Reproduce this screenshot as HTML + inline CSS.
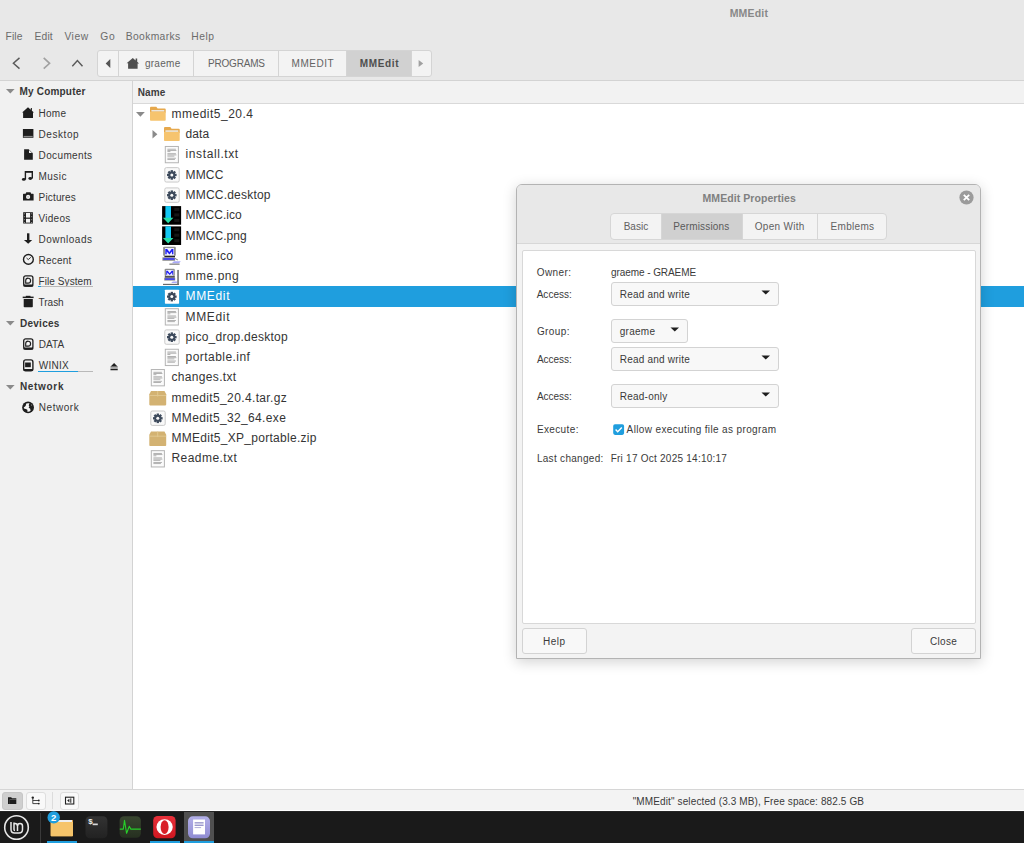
<!DOCTYPE html>
<html><head><meta charset="utf-8"><style>
html,body{margin:0;padding:0;}
body{width:1024px;height:843px;position:relative;overflow:hidden;background:#e8e8e8;font-family:"Liberation Sans", sans-serif;}
.a{position:absolute;}
.t{position:absolute;white-space:nowrap;}
</style></head><body>
<div class="a" style="left:0px;top:0px;width:1024px;height:80px;background:#e8e8e8;"></div>
<div class="a" style="left:0px;top:80px;width:1024px;height:1px;background:#d3d3d3;"></div>
<div class="t" id="t0" style="left:729.70px;top:7.61px;font-size:10.5px;line-height:10.5px;color:#888888;font-weight:700;letter-spacing:0.180px;">MMEdit</div>
<div class="t" id="t1" style="left:5.60px;top:31.68px;font-size:10.3px;line-height:10.3px;color:#6b6b6b;font-weight:400;letter-spacing:0.066px;">File</div>
<div class="t" id="t2" style="left:34.40px;top:31.68px;font-size:10.3px;line-height:10.3px;color:#6b6b6b;font-weight:400;letter-spacing:0.200px;">Edit</div>
<div class="t" id="t3" style="left:64.40px;top:31.68px;font-size:10.3px;line-height:10.3px;color:#6b6b6b;font-weight:400;letter-spacing:0.534px;">View</div>
<div class="t" id="t4" style="left:100.30px;top:31.68px;font-size:10.3px;line-height:10.3px;color:#6b6b6b;font-weight:400;letter-spacing:0.700px;">Go</div>
<div class="t" id="t5" style="left:125.70px;top:31.68px;font-size:10.3px;line-height:10.3px;color:#6b6b6b;font-weight:400;letter-spacing:0.375px;">Bookmarks</div>
<div class="t" id="t6" style="left:191.20px;top:31.68px;font-size:10.3px;line-height:10.3px;color:#6b6b6b;font-weight:400;letter-spacing:0.567px;">Help</div>
<svg class="a" style="left:0px;top:50px;" width="100" height="26" viewBox="0 0 100 26"><path d="M19.5 7.9 L13.4 13.3 L19.5 18.6" fill="none" stroke="#5a5a5a" stroke-width="1.45"/><path d="M43.7 7.9 L49.6 13.3 L43.7 18.6" fill="none" stroke="#a0a0a0" stroke-width="1.6"/><path d="M72.3 16.2 L77.4 10.6 L82.5 16.2" fill="none" stroke="#5a5a5a" stroke-width="1.45"/></svg>
<div class="a" style="left:97px;top:50px;width:335px;height:27px;background:#f3f3f3;box-sizing:border-box;border:1px solid #d4d4d4;border-radius:3px;"></div>
<div class="a" style="left:346px;top:51px;width:65px;height:25px;background:#d1d1d1;"></div>
<div class="a" style="left:118px;top:51px;width:1px;height:25px;background:#d4d4d4;"></div>
<div class="a" style="left:193px;top:51px;width:1px;height:25px;background:#d4d4d4;"></div>
<div class="a" style="left:278px;top:51px;width:1px;height:25px;background:#d4d4d4;"></div>
<div class="a" style="left:346px;top:51px;width:1px;height:25px;background:#d4d4d4;"></div>
<div class="a" style="left:411px;top:51px;width:1px;height:25px;background:#d4d4d4;"></div>
<svg class="a" style="left:100px;top:51px;" width="20" height="25" viewBox="0 0 20 25"><path d="M10.3 7.9 L10.3 16.9 L5.7 12.4 Z" fill="#555"/></svg>
<svg class="a" style="left:410px;top:51px;" width="20" height="25" viewBox="0 0 20 25"><path d="M8.6 9 L8.6 16 L13.2 12.5 Z" fill="#a0a0a0"/></svg>
<svg class="a" style="left:126px;top:57px;" width="14" height="13" viewBox="0 0 14 13"><path d="M0.6 6.3 L6.8 1 L9.6 3.4 L9.6 1.6 L11.2 1.6 L11.2 4.8 L13.1 6.4 L11.6 6.4 L11.6 11.7 L2.1 11.7 L2.1 6.3 Z" fill="#4f4f4f"/></svg>
<div class="t" id="t7" style="left:144.90px;top:58.93px;font-size:10px;line-height:10px;color:#626262;font-weight:400;letter-spacing:0.280px;">graeme</div>
<div class="t" id="t8" style="left:208.00px;top:58.93px;font-size:10px;line-height:10px;color:#626262;font-weight:400;letter-spacing:-0.185px;">PROGRAMS</div>
<div class="t" id="t9" style="left:291.60px;top:58.93px;font-size:10px;line-height:10px;color:#626262;font-weight:400;letter-spacing:0.500px;">MMEDIT</div>
<div class="t" id="t10" style="left:359.70px;top:58.93px;font-size:10px;line-height:10px;color:#4e4e4e;font-weight:700;letter-spacing:0.660px;">MMEdit</div>
<div class="a" style="left:0px;top:81px;width:132px;height:708px;background:#f1f1f1;"></div>
<div class="a" style="left:132px;top:81px;width:1px;height:708px;background:#d3d3d3;"></div>
<svg class="a" style="left:5.9px;top:89.2px;" width="10" height="6" viewBox="0 0 10 6"><path d="M0 0 L8.6 0 L4.3 4.6 Z" fill="#8a8a8a"/></svg>
<div class="t" id="t11" style="left:19.60px;top:86.93px;font-size:10px;line-height:10px;color:#363636;font-weight:700;letter-spacing:0.180px;">My Computer</div>
<div class="t" id="t12" style="left:38.60px;top:108.53px;font-size:10px;line-height:10px;color:#363636;font-weight:400;letter-spacing:0.234px;">Home</div>
<div class="t" id="t13" style="left:38.60px;top:129.53px;font-size:10px;line-height:10px;color:#363636;font-weight:400;letter-spacing:0.551px;">Desktop</div>
<div class="t" id="t14" style="left:38.60px;top:150.53px;font-size:10px;line-height:10px;color:#363636;font-weight:400;letter-spacing:0.361px;">Documents</div>
<div class="t" id="t15" style="left:38.60px;top:171.53px;font-size:10px;line-height:10px;color:#363636;font-weight:400;letter-spacing:0.425px;">Music</div>
<div class="t" id="t16" style="left:38.60px;top:192.53px;font-size:10px;line-height:10px;color:#363636;font-weight:400;letter-spacing:0.157px;">Pictures</div>
<div class="t" id="t17" style="left:38.60px;top:213.53px;font-size:10px;line-height:10px;color:#363636;font-weight:400;letter-spacing:0.240px;">Videos</div>
<div class="t" id="t18" style="left:38.60px;top:234.53px;font-size:10px;line-height:10px;color:#363636;font-weight:400;letter-spacing:0.486px;">Downloads</div>
<div class="t" id="t19" style="left:38.60px;top:255.53px;font-size:10px;line-height:10px;color:#363636;font-weight:400;letter-spacing:0.200px;">Recent</div>
<div class="t" id="t20" style="left:38.60px;top:276.54px;font-size:10px;line-height:10px;color:#363636;font-weight:400;letter-spacing:0.070px;">File System</div>
<div class="t" id="t21" style="left:38.60px;top:297.54px;font-size:10px;line-height:10px;color:#363636;font-weight:400;letter-spacing:-0.025px;">Trash</div>
<svg class="a" style="left:5.9px;top:321.4px;" width="10" height="6" viewBox="0 0 10 6"><path d="M0 0 L8.6 0 L4.3 4.6 Z" fill="#8a8a8a"/></svg>
<div class="t" id="t22" style="left:19.90px;top:318.74px;font-size:10px;line-height:10px;color:#363636;font-weight:700;letter-spacing:0.283px;">Devices</div>
<div class="t" id="t23" style="left:38.80px;top:339.84px;font-size:10px;line-height:10px;color:#363636;font-weight:400;letter-spacing:0.033px;">DATA</div>
<div class="t" id="t24" style="left:38.80px;top:360.84px;font-size:10px;line-height:10px;color:#363636;font-weight:400;letter-spacing:0.225px;">WINIX</div>
<svg class="a" style="left:5.9px;top:384.5px;" width="10" height="6" viewBox="0 0 10 6"><path d="M0 0 L8.6 0 L4.3 4.6 Z" fill="#8a8a8a"/></svg>
<div class="t" id="t25" style="left:19.90px;top:381.84px;font-size:10px;line-height:10px;color:#363636;font-weight:700;letter-spacing:0.683px;">Network</div>
<div class="t" id="t26" style="left:38.80px;top:402.64px;font-size:10px;line-height:10px;color:#363636;font-weight:400;letter-spacing:0.534px;">Network</div>
<svg class="a" style="left:20px;top:105px;" width="16" height="15" viewBox="0 0 16 15"><path d="M2.1 7.5 L8 2.2 L10.8 4.7 L10.8 3 L11.9 3 L11.9 5.7 L14 7.5 L13 7.5 L13 12.9 L3.1 12.9 L3.1 7.5 Z" fill="#1e1e1e"/></svg>
<svg class="a" style="left:20px;top:127px;" width="16" height="13" viewBox="0 0 16 13"><rect x="2.9" y="2" width="10.5" height="8.8" fill="#1e1e1e"/><rect x="3.6" y="8.9" width="9.1" height="1.3" fill="#8a8a8a"/></svg>
<svg class="a" style="left:20px;top:147px;" width="16" height="15" viewBox="0 0 16 15"><path d="M4.1 2.2 L8.7 2.2 L12.8 6.3 L12.8 12.7 L4.1 12.7 Z" fill="#1e1e1e"/><path d="M9 3 L12 6 L9 6 Z" fill="#f1f1f1"/></svg>
<svg class="a" style="left:20px;top:169px;" width="16" height="14" viewBox="0 0 16 14"><path d="M5.4 10.4 L5.4 2.8 L12.3 2.8 L12.3 9.6" fill="none" stroke="#1e1e1e" stroke-width="1.4"/><rect x="5" y="2" width="7.8" height="1.6" fill="#1e1e1e"/><ellipse cx="3.8" cy="10.4" rx="1.9" ry="1.4" fill="#1e1e1e"/><ellipse cx="10.3" cy="9.5" rx="1.9" ry="1.4" fill="#1e1e1e"/></svg>
<svg class="a" style="left:20px;top:190px;" width="16" height="13" viewBox="0 0 16 13"><path d="M3 4.2 Q3 3.8 3.5 3.8 L5.6 3.8 L6.3 2.3 L10.5 2.3 L11.2 3.8 L13.1 3.8 Q13.6 3.8 13.6 4.3 L13.6 10.6 L3 10.6 Z" fill="#1e1e1e"/><circle cx="8.1" cy="6.9" r="2.1" fill="#f1f1f1"/><circle cx="8.1" cy="6.9" r="0.8" fill="#bbb"/></svg>
<svg class="a" style="left:20px;top:210px;" width="16" height="16" viewBox="0 0 16 16"><rect x="3.2" y="2.2" width="9.7" height="11.3" fill="#1e1e1e"/><rect x="6" y="3" width="4.1" height="4.6" fill="#f4f4f4"/><rect x="6" y="8.8" width="4.1" height="3.8" fill="#f4f4f4"/><rect x="3.9" y="3.3" width="1.2" height="1" fill="#888"/><rect x="11" y="3.3" width="1.2" height="1" fill="#888"/><rect x="3.9" y="6.2" width="1.2" height="1" fill="#888"/><rect x="11" y="6.2" width="1.2" height="1" fill="#888"/><rect x="3.9" y="9.2" width="1.2" height="1" fill="#888"/><rect x="11" y="9.2" width="1.2" height="1" fill="#888"/><rect x="3.9" y="12" width="1.2" height="1" fill="#888"/><rect x="11" y="12" width="1.2" height="1" fill="#888"/></svg>
<svg class="a" style="left:20px;top:231px;" width="16" height="15" viewBox="0 0 16 15"><rect x="7" y="2.3" width="2.4" height="7" fill="#1e1e1e"/><path d="M3.9 9 L12.2 9 L8.2 12.8 Z" fill="#1e1e1e"/></svg>
<svg class="a" style="left:20px;top:251px;" width="16" height="16" viewBox="0 0 16 16"><circle cx="8.4" cy="8.4" r="4.9" fill="none" stroke="#1e1e1e" stroke-width="1.4"/><path d="M6.5 7 L8.3 8.6 L10.8 6.3" fill="none" stroke="#1e1e1e" stroke-width="0.9"/></svg>
<svg class="a" style="left:20px;top:275px;" width="16" height="14" viewBox="0 0 16 14"><rect x="3.7" y="0.8" width="9.2" height="10.2" rx="2" fill="none" stroke="#1e1e1e" stroke-width="1.3"/><rect x="3.3" y="9.4" width="10" height="2.3" rx="1" fill="#1e1e1e"/><path d="M5.7 8.1 L5.7 5.6 A2.45 2.45 0 1 1 8.15 8.1 Z" fill="none" stroke="#1e1e1e" stroke-width="1.15"/><circle cx="8.15" cy="5.6" r="0.8" fill="#fff"/></svg>
<svg class="a" style="left:20px;top:338.2px;" width="16" height="14" viewBox="0 0 16 14"><rect x="3.7" y="0.8" width="9.2" height="10.2" rx="2" fill="none" stroke="#1e1e1e" stroke-width="1.3"/><rect x="3.3" y="9.4" width="10" height="2.3" rx="1" fill="#1e1e1e"/><path d="M5.7 8.1 L5.7 5.6 A2.45 2.45 0 1 1 8.15 8.1 Z" fill="none" stroke="#1e1e1e" stroke-width="1.15"/><circle cx="8.15" cy="5.6" r="0.8" fill="#fff"/></svg>
<svg class="a" style="left:20px;top:294px;" width="16" height="15" viewBox="0 0 16 15"><rect x="2.7" y="2.6" width="10.9" height="1.5" fill="#1e1e1e"/><rect x="5.8" y="1.8" width="4.7" height="1.2" fill="#1e1e1e"/><path d="M3.7 5 L12.8 5 L12.8 12.6 Q12.8 13.3 12 13.3 L4.5 13.3 Q3.7 13.3 3.7 12.6 Z" fill="#1e1e1e"/></svg>
<svg class="a" style="left:20px;top:358.5px;" width="16" height="14" viewBox="0 0 16 14"><rect x="3.7" y="0.9" width="9.2" height="10.9" rx="2" fill="none" stroke="#1e1e1e" stroke-width="1.4"/><rect x="3.5" y="9.9" width="9.6" height="2.2" rx="1" fill="#1e1e1e"/><rect x="5.1" y="3.5" width="5.7" height="4.7" fill="#1e1e1e"/></svg>
<svg class="a" style="left:20px;top:399px;" width="16" height="16" viewBox="0 0 16 16"><circle cx="8.05" cy="8.4" r="5.9" fill="#1e1e1e"/><path d="M6.3 4.5 Q7.6 3.9 9.5 4.3 L8.7 6.2 L9.4 7.4 L8.6 8.6 L10.2 9.8 L10.6 11.8 Q9 13 7.2 12.6 L7.5 11 L6 10 L4.4 9.8 L3.7 8.5 L5.6 7 Z" fill="#f5f5f5"/><path d="M11 5.6 L12.2 6 L11.6 6.7 Z" fill="#ddd"/></svg>
<svg class="a" style="left:108px;top:360px;" width="12" height="12" viewBox="0 0 12 12"><path d="M2.4 6.7 L6.1 2.9 L9.8 6.7 Z" fill="#1e1e1e"/><rect x="2.4" y="6.7" width="7.4" height="2.3" fill="#a8a8a8"/><rect x="2.4" y="9" width="7.4" height="1.3" rx="0.5" fill="#1e1e1e"/></svg>
<div class="a" style="left:38.3px;top:286px;width:54.5px;height:1.2px;background:#b9b9b9;"></div>
<div class="a" style="left:38.3px;top:286px;width:3px;height:1.2px;background:#1f9ede;"></div>
<div class="a" style="left:38.3px;top:370.6px;width:54.5px;height:1.4px;background:#b9b9b9;"></div>
<div class="a" style="left:38.3px;top:370.6px;width:40px;height:1.4px;background:#1f9ede;"></div>
<div class="a" style="left:133px;top:81px;width:891px;height:22px;background:#f2f2f2;"></div>
<div class="a" style="left:133px;top:103px;width:891px;height:1px;background:#d9d9d9;"></div>
<div class="a" style="left:133px;top:104px;width:891px;height:685px;background:#ffffff;"></div>
<div class="t" id="t27" style="left:137.80px;top:88.03px;font-size:10px;line-height:10px;color:#3d3d3d;font-weight:700;letter-spacing:0.066px;">Name</div>
<div class="a" style="left:133px;top:286px;width:891px;height:20.6px;background:#1f9ede;"></div>
<div class="t" id="t28" style="left:171.50px;top:107.94px;font-size:12px;line-height:12px;color:#343434;font-weight:400;letter-spacing:0.500px;">mmedit5_20.4</div>
<div class="t" id="t29" style="left:185.60px;top:128.20px;font-size:12px;line-height:12px;color:#343434;font-weight:400;letter-spacing:0.066px;">data</div>
<div class="t" id="t30" style="left:185.60px;top:148.46px;font-size:12px;line-height:12px;color:#343434;font-weight:400;letter-spacing:0.590px;">install.txt</div>
<div class="t" id="t31" style="left:185.60px;top:168.72px;font-size:12px;line-height:12px;color:#343434;font-weight:400;letter-spacing:0.133px;">MMCC</div>
<div class="t" id="t32" style="left:185.60px;top:188.98px;font-size:12px;line-height:12px;color:#343434;font-weight:400;letter-spacing:0.199px;">MMCC.desktop</div>
<div class="t" id="t33" style="left:185.60px;top:209.24px;font-size:12px;line-height:12px;color:#343434;font-weight:400;letter-spacing:0.014px;">MMCC.ico</div>
<div class="t" id="t34" style="left:185.60px;top:229.50px;font-size:12px;line-height:12px;color:#343434;font-weight:400;letter-spacing:0.071px;">MMCC.png</div>
<div class="t" id="t35" style="left:185.60px;top:249.76px;font-size:12px;line-height:12px;color:#343434;font-weight:400;letter-spacing:0.350px;">mme.ico</div>
<div class="t" id="t36" style="left:185.60px;top:270.02px;font-size:12px;line-height:12px;color:#343434;font-weight:400;letter-spacing:0.517px;">mme.png</div>
<div class="t" id="t37" style="left:185.60px;top:290.28px;font-size:12px;line-height:12px;color:#ffffff;font-weight:400;letter-spacing:0.640px;">MMEdit</div>
<div class="t" id="t38" style="left:185.60px;top:310.54px;font-size:12px;line-height:12px;color:#343434;font-weight:400;letter-spacing:0.640px;">MMEdit</div>
<div class="t" id="t39" style="left:185.60px;top:330.80px;font-size:12px;line-height:12px;color:#343434;font-weight:400;letter-spacing:0.244px;">pico_drop.desktop</div>
<div class="t" id="t40" style="left:185.60px;top:351.06px;font-size:12px;line-height:12px;color:#343434;font-weight:400;letter-spacing:0.445px;">portable.inf</div>
<div class="t" id="t41" style="left:171.50px;top:371.32px;font-size:12px;line-height:12px;color:#343434;font-weight:400;letter-spacing:0.330px;">changes.txt</div>
<div class="t" id="t42" style="left:171.50px;top:391.58px;font-size:12px;line-height:12px;color:#343434;font-weight:400;letter-spacing:0.366px;">mmedit5_20.4.tar.gz</div>
<div class="t" id="t43" style="left:171.50px;top:411.84px;font-size:12px;line-height:12px;color:#343434;font-weight:400;letter-spacing:0.351px;">MMedit5_32_64.exe</div>
<div class="t" id="t44" style="left:171.50px;top:432.10px;font-size:12px;line-height:12px;color:#343434;font-weight:400;letter-spacing:0.282px;">MMEdit5_XP_portable.zip</div>
<div class="t" id="t45" style="left:171.50px;top:452.36px;font-size:12px;line-height:12px;color:#343434;font-weight:400;letter-spacing:0.444px;">Readme.txt</div>
<svg class="a" style="left:0;top:0" width="1024" height="843" viewBox="0 0 1024 843"><path d="M150 108.2 Q150 106.8 150.9 106.8 L156.3 106.8 L157.6 108.39999999999999 L164.8 108.39999999999999 Q165.7 108.39999999999999 165.7 109.3 L165.7 112.8 L150 112.8 Z" fill="#e6a84c"/><rect x="151.4" y="110.0" width="12.9" height="1.6" fill="#ebe6dc"/><path d="M150 111.8 L165.7 111.8 L165.7 119.89999999999999 Q165.7 120.7 164.9 120.7 L150.8 120.7 Q150 120.7 150 119.89999999999999 Z" fill="#f6c46e"/><path d="M164 128.48 Q164 127.08 164.9 127.08 L170.3 127.08 L171.6 128.68 L178.8 128.68 Q179.7 128.68 179.7 129.57999999999998 L179.7 133.07999999999998 L164 133.07999999999998 Z" fill="#e6a84c"/><rect x="165.4" y="130.28" width="12.9" height="1.6" fill="#ebe6dc"/><path d="M164 132.07999999999998 L179.7 132.07999999999998 L179.7 140.18 Q179.7 140.98 178.9 140.98 L164.8 140.98 Q164 140.98 164 140.18 Z" fill="#f6c46e"/><rect x="165.3" y="146.46" width="13.1" height="16.3" fill="#fbfbfb" stroke="#b4b4b4" stroke-width="1"/><rect x="167.4" y="148.76000000000002" width="8.5" height="0.9" fill="#a9a9a9"/><rect x="167.4" y="149.96" width="9" height="0.9" fill="#a9a9a9"/><rect x="167.4" y="151.16" width="3" height="0.9" fill="#a9a9a9"/><rect x="167.4" y="153.26000000000002" width="8.5" height="0.9" fill="#a9a9a9"/><rect x="167.4" y="154.46" width="9" height="0.9" fill="#a9a9a9"/><rect x="167.4" y="155.66" width="7" height="0.9" fill="#a9a9a9"/><rect x="167.4" y="157.76000000000002" width="8.5" height="0.9" fill="#a9a9a9"/><rect x="167.4" y="158.96" width="7.5" height="0.9" fill="#a9a9a9"/><rect x="164.8" y="167.64000000000001" width="14.4" height="14.4" rx="1.5" fill="#f9f9f9" stroke="#c9c9c9" stroke-width="1"/><g transform="translate(171.8 174.94000000000003)" fill="#3d4a5c"><circle r="3.5"/><rect x="-1.15" y="-4.8" width="2.3" height="2.2" transform="rotate(0)"/><rect x="-1.15" y="-4.8" width="2.3" height="2.2" transform="rotate(45)"/><rect x="-1.15" y="-4.8" width="2.3" height="2.2" transform="rotate(90)"/><rect x="-1.15" y="-4.8" width="2.3" height="2.2" transform="rotate(135)"/><rect x="-1.15" y="-4.8" width="2.3" height="2.2" transform="rotate(180)"/><rect x="-1.15" y="-4.8" width="2.3" height="2.2" transform="rotate(225)"/><rect x="-1.15" y="-4.8" width="2.3" height="2.2" transform="rotate(270)"/><rect x="-1.15" y="-4.8" width="2.3" height="2.2" transform="rotate(315)"/><circle r="1.5" fill="#f9f9f9"/></g><rect x="164.8" y="187.92000000000002" width="14.4" height="14.4" rx="1.5" fill="#f9f9f9" stroke="#c9c9c9" stroke-width="1"/><g transform="translate(171.8 195.22000000000003)" fill="#3d4a5c"><circle r="3.5"/><rect x="-1.15" y="-4.8" width="2.3" height="2.2" transform="rotate(0)"/><rect x="-1.15" y="-4.8" width="2.3" height="2.2" transform="rotate(45)"/><rect x="-1.15" y="-4.8" width="2.3" height="2.2" transform="rotate(90)"/><rect x="-1.15" y="-4.8" width="2.3" height="2.2" transform="rotate(135)"/><rect x="-1.15" y="-4.8" width="2.3" height="2.2" transform="rotate(180)"/><rect x="-1.15" y="-4.8" width="2.3" height="2.2" transform="rotate(225)"/><rect x="-1.15" y="-4.8" width="2.3" height="2.2" transform="rotate(270)"/><rect x="-1.15" y="-4.8" width="2.3" height="2.2" transform="rotate(315)"/><circle r="1.5" fill="#f9f9f9"/></g><rect x="162.1" y="206.1" width="19" height="18.6" fill="#000"/><rect x="165.4" y="206.1" width="5.6" height="12" fill="#14c8f4"/><path d="M162.9 217.7 L173.4 217.7 L168.15 223.29999999999998 Z" fill="#27dfa6"/><g fill="#161616"><rect x="174.29999999999998" y="207.9" width="5" height="3"/><rect x="174.29999999999998" y="213.4" width="5" height="3"/><rect x="174.29999999999998" y="218.9" width="5" height="3"/></g><rect x="162.1" y="226.38" width="19" height="18.6" fill="#000"/><rect x="165.4" y="226.38" width="5.6" height="12" fill="#14c8f4"/><path d="M162.9 237.98 L173.4 237.98 L168.15 243.57999999999998 Z" fill="#27dfa6"/><g fill="#161616"><rect x="174.29999999999998" y="228.18" width="5" height="3"/><rect x="174.29999999999998" y="233.68" width="5" height="3"/><rect x="174.29999999999998" y="239.18" width="5" height="3"/></g><rect x="163.1" y="246.66" width="12.7" height="9.3" rx="1.2" fill="#8e8e8e"/><rect x="165.0" y="248.06" width="9" height="7.3" fill="#f2f2ff"/><path d="M165.29999999999998 254.16 L165.29999999999998 248.96 L167.2 248.96 L169.39999999999998 251.96 L171.6 248.96 L173.39999999999998 248.96 L173.39999999999998 254.16 L172.0 254.16 L172.0 251.56 L169.39999999999998 254.56 L166.7 251.56 L166.7 254.16 Z" fill="#2020f4"/><rect x="164.39999999999998" y="256.06" width="10.6" height="1.2" fill="#151515"/><rect x="162.39999999999998" y="257.36" width="12.7" height="3.4" fill="#8a8a8a"/><rect x="163.39999999999998" y="257.96000000000004" width="11.1" height="2" fill="#4848e6"/><path d="M175.1 258.46000000000004 L177.79999999999998 259.96000000000004" stroke="#666" stroke-width="0.9"/><path d="M171.7 263.16 L174.0 261.16 L180.79999999999998 261.16 L179.0 263.16 Z" fill="#a9a9f6"/><rect x="169.39999999999998" y="263.56" width="10.2" height="1.2" fill="#7a7a7a"/><rect x="164.6" y="268.84000000000003" width="10.2" height="7.4" rx="1.2" fill="#8e8e8e"/><rect x="166.0" y="270.04" width="7.4" height="5.6" fill="#f2f2ff"/><path d="M166.2 274.64 L166.2 270.74 L167.7 270.74 L169.7 273.24 L171.7 270.74 L173.2 270.74 L173.2 274.64 L172.2 274.64 L172.2 272.44 L169.7 275.04 L167.2 272.44 L167.2 274.64 Z" fill="#2020f4"/><rect x="164.79999999999998" y="276.24" width="10" height="1.4" fill="#262626"/><rect x="164.2" y="277.74" width="11" height="2.8" fill="#8a8a8a"/><rect x="165.0" y="278.24" width="9.6" height="1.8" fill="#4848e6"/><path d="M171.2 283.04 L172.79999999999998 281.44 L177.79999999999998 281.44 L176.5 283.04 Z" fill="#a9a9f6"/><rect x="177.2" y="269.94" width="1.7" height="14.8" fill="#7a7a7a"/><rect x="163.0" y="283.84000000000003" width="15.9" height="1.2" fill="#6a6a6a"/><rect x="164.9" y="289.71999999999997" width="14.2" height="14" rx="0.6" fill="#ffffff"/><g transform="translate(171.8 296.62)" fill="#3d4a5c"><circle r="3.5"/><rect x="-1.15" y="-4.8" width="2.3" height="2.2" transform="rotate(0)"/><rect x="-1.15" y="-4.8" width="2.3" height="2.2" transform="rotate(45)"/><rect x="-1.15" y="-4.8" width="2.3" height="2.2" transform="rotate(90)"/><rect x="-1.15" y="-4.8" width="2.3" height="2.2" transform="rotate(135)"/><rect x="-1.15" y="-4.8" width="2.3" height="2.2" transform="rotate(180)"/><rect x="-1.15" y="-4.8" width="2.3" height="2.2" transform="rotate(225)"/><rect x="-1.15" y="-4.8" width="2.3" height="2.2" transform="rotate(270)"/><rect x="-1.15" y="-4.8" width="2.3" height="2.2" transform="rotate(315)"/><circle r="1.5" fill="#ffffff"/></g><rect x="165.3" y="308.7" width="13.1" height="16.3" fill="#fbfbfb" stroke="#b4b4b4" stroke-width="1"/><rect x="167.4" y="311.0" width="8.5" height="0.9" fill="#a9a9a9"/><rect x="167.4" y="312.2" width="9" height="0.9" fill="#a9a9a9"/><rect x="167.4" y="313.4" width="3" height="0.9" fill="#a9a9a9"/><rect x="167.4" y="315.5" width="8.5" height="0.9" fill="#a9a9a9"/><rect x="167.4" y="316.7" width="9" height="0.9" fill="#a9a9a9"/><rect x="167.4" y="317.9" width="7" height="0.9" fill="#a9a9a9"/><rect x="167.4" y="320.0" width="8.5" height="0.9" fill="#a9a9a9"/><rect x="167.4" y="321.2" width="7.5" height="0.9" fill="#a9a9a9"/><rect x="164.8" y="329.88000000000005" width="14.4" height="14.4" rx="1.5" fill="#f9f9f9" stroke="#c9c9c9" stroke-width="1"/><g transform="translate(171.8 337.18000000000006)" fill="#3d4a5c"><circle r="3.5"/><rect x="-1.15" y="-4.8" width="2.3" height="2.2" transform="rotate(0)"/><rect x="-1.15" y="-4.8" width="2.3" height="2.2" transform="rotate(45)"/><rect x="-1.15" y="-4.8" width="2.3" height="2.2" transform="rotate(90)"/><rect x="-1.15" y="-4.8" width="2.3" height="2.2" transform="rotate(135)"/><rect x="-1.15" y="-4.8" width="2.3" height="2.2" transform="rotate(180)"/><rect x="-1.15" y="-4.8" width="2.3" height="2.2" transform="rotate(225)"/><rect x="-1.15" y="-4.8" width="2.3" height="2.2" transform="rotate(270)"/><rect x="-1.15" y="-4.8" width="2.3" height="2.2" transform="rotate(315)"/><circle r="1.5" fill="#f9f9f9"/></g><rect x="165.3" y="349.26" width="13.1" height="16.3" fill="#fbfbfb" stroke="#b4b4b4" stroke-width="1"/><rect x="167.4" y="351.56" width="8.5" height="0.9" fill="#a9a9a9"/><rect x="167.4" y="352.76" width="9" height="0.9" fill="#a9a9a9"/><rect x="167.4" y="353.96" width="3" height="0.9" fill="#a9a9a9"/><rect x="167.4" y="356.06" width="8.5" height="0.9" fill="#a9a9a9"/><rect x="167.4" y="357.26" width="9" height="0.9" fill="#a9a9a9"/><rect x="167.4" y="358.46" width="7" height="0.9" fill="#a9a9a9"/><rect x="167.4" y="360.56" width="8.5" height="0.9" fill="#a9a9a9"/><rect x="167.4" y="361.76" width="7.5" height="0.9" fill="#a9a9a9"/><rect x="151.3" y="369.53999999999996" width="13.1" height="16.3" fill="#fbfbfb" stroke="#b4b4b4" stroke-width="1"/><rect x="153.4" y="371.84" width="8.5" height="0.9" fill="#a9a9a9"/><rect x="153.4" y="373.03999999999996" width="9" height="0.9" fill="#a9a9a9"/><rect x="153.4" y="374.23999999999995" width="3" height="0.9" fill="#a9a9a9"/><rect x="153.4" y="376.34" width="8.5" height="0.9" fill="#a9a9a9"/><rect x="153.4" y="377.53999999999996" width="9" height="0.9" fill="#a9a9a9"/><rect x="153.4" y="378.73999999999995" width="7" height="0.9" fill="#a9a9a9"/><rect x="153.4" y="380.84" width="8.5" height="0.9" fill="#a9a9a9"/><rect x="153.4" y="382.03999999999996" width="7.5" height="0.9" fill="#a9a9a9"/><path d="M151.0 391.02000000000004 L164.5 391.02000000000004 L166.20000000000002 394.22 L166.20000000000002 404.62000000000006 Q166.20000000000002 405.42 165.4 405.42 L150.10000000000002 405.42 Q149.3 405.42 149.3 404.62000000000006 L149.3 394.22 Z" fill="#d3b272"/><rect x="149.3" y="395.22" width="16.9" height="0.7" fill="#e6cf9c"/><rect x="157.20000000000002" y="391.02000000000004" width="1" height="5.5" fill="#e2c88e"/><rect x="150.8" y="411.00000000000006" width="14.4" height="14.4" rx="1.5" fill="#f9f9f9" stroke="#c9c9c9" stroke-width="1"/><g transform="translate(157.8 418.30000000000007)" fill="#3d4a5c"><circle r="3.5"/><rect x="-1.15" y="-4.8" width="2.3" height="2.2" transform="rotate(0)"/><rect x="-1.15" y="-4.8" width="2.3" height="2.2" transform="rotate(45)"/><rect x="-1.15" y="-4.8" width="2.3" height="2.2" transform="rotate(90)"/><rect x="-1.15" y="-4.8" width="2.3" height="2.2" transform="rotate(135)"/><rect x="-1.15" y="-4.8" width="2.3" height="2.2" transform="rotate(180)"/><rect x="-1.15" y="-4.8" width="2.3" height="2.2" transform="rotate(225)"/><rect x="-1.15" y="-4.8" width="2.3" height="2.2" transform="rotate(270)"/><rect x="-1.15" y="-4.8" width="2.3" height="2.2" transform="rotate(315)"/><circle r="1.5" fill="#f9f9f9"/></g><path d="M151.0 431.58000000000004 L164.5 431.58000000000004 L166.20000000000002 434.78000000000003 L166.20000000000002 445.18000000000006 Q166.20000000000002 445.98 165.4 445.98 L150.10000000000002 445.98 Q149.3 445.98 149.3 445.18000000000006 L149.3 434.78000000000003 Z" fill="#d3b272"/><rect x="149.3" y="435.78000000000003" width="16.9" height="0.7" fill="#e6cf9c"/><rect x="157.20000000000002" y="431.58000000000004" width="1" height="5.5" fill="#e2c88e"/><rect x="151.3" y="450.65999999999997" width="13.1" height="16.3" fill="#fbfbfb" stroke="#b4b4b4" stroke-width="1"/><rect x="153.4" y="452.96" width="8.5" height="0.9" fill="#a9a9a9"/><rect x="153.4" y="454.15999999999997" width="9" height="0.9" fill="#a9a9a9"/><rect x="153.4" y="455.35999999999996" width="3" height="0.9" fill="#a9a9a9"/><rect x="153.4" y="457.46" width="8.5" height="0.9" fill="#a9a9a9"/><rect x="153.4" y="458.65999999999997" width="9" height="0.9" fill="#a9a9a9"/><rect x="153.4" y="459.85999999999996" width="7" height="0.9" fill="#a9a9a9"/><rect x="153.4" y="461.96" width="8.5" height="0.9" fill="#a9a9a9"/><rect x="153.4" y="463.15999999999997" width="7.5" height="0.9" fill="#a9a9a9"/></svg>
<svg class="a" style="left:136.1px;top:111.6px;" width="10" height="6" viewBox="0 0 10 6"><path d="M0 0 L8.8 0 L4.4 4.8 Z" fill="#8a8a8a"/></svg>
<svg class="a" style="left:151.9px;top:129.7px;" width="6" height="9" viewBox="0 0 6 9"><path d="M0.5 0 L5.4 4.3 L0.5 8.6 Z" fill="#8a8a8a"/></svg>
<div class="a" style="left:0px;top:789px;width:1024px;height:1px;background:#d6d6d6;"></div>
<div class="a" style="left:0px;top:790px;width:1024px;height:20px;background:#f3f3f3;"></div>
<div class="a" style="left:0px;top:810px;width:1024px;height:1px;background:#ffffff;"></div>
<div class="a" style="left:2.2px;top:791.5px;width:20.5px;height:18.4px;background:#cfcfcf;box-sizing:border-box;border:1px solid #c6c6c6;border-radius:3px;"></div>
<div class="a" style="left:26.4px;top:791.5px;width:19.3px;height:18.4px;background:#f9f9f9;box-sizing:border-box;border:1px solid #dedede;border-radius:3px;"></div>
<div class="a" style="left:52.2px;top:792px;width:1px;height:17px;background:#dcdcdc;"></div>
<div class="a" style="left:59.6px;top:791.5px;width:19.9px;height:18.4px;background:#f9f9f9;box-sizing:border-box;border:1px solid #dedede;border-radius:3px;"></div>
<svg class="a" style="left:7px;top:796px;" width="12" height="10" viewBox="0 0 12 10"><path d="M1 1.2 L4.2 1.2 L5 2.2 L9.3 2.2 L9.3 3.4 L2.6 3.4 L2.6 8 L1 8 Z" fill="#1e1e1e"/><rect x="2.3" y="3.6" width="7" height="4.4" fill="#1e1e1e"/></svg>
<svg class="a" style="left:31px;top:796px;" width="11" height="10" viewBox="0 0 11 10"><circle cx="1.8" cy="1.6" r="1.2" fill="#222"/><path d="M1.8 2 L1.8 7.6 L7.6 7.6 M1.8 4.5 L7 4.5" stroke="#333" stroke-width="0.9" fill="none"/><circle cx="7.8" cy="4.5" r="0.9" fill="#222"/><circle cx="7.8" cy="7.6" r="0.9" fill="#222"/></svg>
<svg class="a" style="left:64px;top:796px;" width="11" height="10" viewBox="0 0 11 10"><rect x="1.5" y="1.2" width="8.3" height="6.8" fill="none" stroke="#222" stroke-width="1.1"/><path d="M5.4 2.8 L5.4 6.4 L3.2 4.6 Z" fill="#222"/><rect x="6.3" y="2.4" width="1" height="4.4" fill="#222"/></svg>
<div class="t" id="t46" style="left:632.70px;top:796.93px;font-size:10px;line-height:10px;color:#3a3a3a;font-weight:400;letter-spacing:0.123px;">"MMEdit" selected (3.3 MB), Free space: 882.5 GB</div>
<div class="a" style="left:0px;top:811px;width:1024px;height:32px;background:#1a1a1a;"></div>
<div class="a" style="left:0px;top:811px;width:1024px;height:1px;background:#252525;"></div>
<div class="a" style="left:40.3px;top:812.5px;width:1px;height:31px;background:#3a3a3a;"></div>
<svg class="a" style="left:3px;top:814px;" width="27" height="27" viewBox="0 0 27 27"><circle cx="13.5" cy="13.5" r="11.8" fill="none" stroke="#e6e6e6" stroke-width="1.6"/><path d="M8 8 L8 15.5 Q8 19 11.5 19 L16 19 Q19.5 19 19.5 15.5 L19.5 12 Q19.5 9.5 17 9.5 Q14.5 9.5 14.5 12 L14.5 17" fill="none" stroke="#e6e6e6" stroke-width="1.5"/><path d="M11 8.5 L11 15.5 Q11 16.5 12 16.5 M14.5 12 Q14.5 9.5 12 9.5 Q11 9.5 11 11" fill="none" stroke="#e6e6e6" stroke-width="1.5"/></svg>
<svg class="a" style="left:46px;top:811px;" width="32" height="32" viewBox="0 0 32 32"><path d="M4.7 7.5 L12 7.5 L13 9 L26.5 9 Q27 9 27 9.5 L27 24.5 Q27 25.2 26.3 25.2 L5.4 25.2 Q4.7 25.2 4.7 24.5 Z" fill="#e5a448"/><rect x="6" y="9" width="20" height="2" fill="#eeeeee"/><path d="M4.7 11 L27 11 L27 24.5 Q27 25.2 26.3 25.2 L5.4 25.2 Q4.7 25.2 4.7 24.5 Z" fill="#f6c46a"/><circle cx="7.7" cy="6.4" r="6.2" fill="#1f9ede"/><text x="7.7" y="9.8" font-family="Liberation Sans" font-weight="700" font-size="9.5" fill="#fff" text-anchor="middle">2</text></svg>
<div class="a" style="left:47px;top:841px;width:30px;height:2px;background:#1f9ede;"></div>
<svg class="a" style="left:84.5px;top:815.5px;" width="23" height="23" viewBox="0 0 23 23"><defs><linearGradient id="tg" x1="0" y1="0" x2="0" y2="1"><stop offset="0" stop-color="#333"/><stop offset="1" stop-color="#222"/></linearGradient></defs><rect x="0.5" y="0.3" width="21.9" height="21.9" rx="4.5" fill="url(#tg)"/><text x="3.2" y="7.9" font-family="Liberation Sans" font-weight="700" font-size="8" fill="#eee">$</text><rect x="7.6" y="7.5" width="5.2" height="1.7" fill="#d8d8d8"/></svg>
<svg class="a" style="left:119.3px;top:815.5px;" width="23" height="23" viewBox="0 0 23 23"><defs><linearGradient id="sg" x1="0" y1="0" x2="0" y2="1"><stop offset="0" stop-color="#38452f"/><stop offset="1" stop-color="#263020"/></linearGradient></defs><rect x="0.6" y="0.2" width="21.3" height="21.6" rx="4.5" fill="url(#sg)"/><path d="M0.8 13.1 L4.3 13.1 L5.5 4.3 L7.6 17.3 L10.3 10.3 L11.7 13.1 L21.8 13.1" fill="none" stroke="#27cf2a" stroke-width="1.1" stroke-linejoin="round"/></svg>
<svg class="a" style="left:153.4px;top:815.5px;" width="23" height="23" viewBox="0 0 23 23"><defs><linearGradient id="og" x1="0" y1="0" x2="0" y2="1"><stop offset="0" stop-color="#e8303a"/><stop offset="1" stop-color="#cf1720"/></linearGradient></defs><rect x="0.2" y="0" width="22.4" height="22.3" rx="4.5" fill="url(#og)"/><ellipse cx="11.6" cy="11.1" rx="8.15" ry="7.8" fill="#fff"/><ellipse cx="11.6" cy="11.1" rx="4" ry="6.8" fill="#d92028"/></svg>
<div class="a" style="left:150px;top:841px;width:30px;height:2px;background:#1f9ede;"></div>
<div class="a" style="left:184.1px;top:812px;width:30px;height:31px;background:#505050;"></div>
<svg class="a" style="left:188px;top:815.5px;" width="23" height="23" viewBox="0 0 23 23"><defs><linearGradient id="eg" x1="0" y1="0" x2="0" y2="1"><stop offset="0" stop-color="#b2afe8"/><stop offset="1" stop-color="#8f8bd2"/></linearGradient></defs><rect x="0" y="0.3" width="22" height="22" rx="4.8" fill="url(#eg)"/><rect x="5.1" y="3.5" width="11.9" height="14.9" fill="#fff"/><rect x="6.6" y="6.2" width="9" height="1.3" fill="#9290c8"/><rect x="6.6" y="8.6" width="9" height="1.3" fill="#9290c8"/><rect x="6.6" y="11" width="6.5" height="1.1" fill="#b8b6dc"/></svg>
<div class="a" style="left:184.1px;top:841px;width:30px;height:2px;background:#1f9ede;"></div>
<div class="a" style="left:516px;top:184px;width:465px;height:475px;border-radius:6px 6px 0 0;box-shadow:0 3px 14px rgba(0,0,0,0.18);"></div>
<div class="a" style="left:516px;top:184px;width:465px;height:475px;background:#f3f3f3;box-sizing:border-box;border:1px solid #b3b3b3;border-radius:6px 6px 0 0;"></div>
<div class="a" style="left:517px;top:185px;width:463px;height:58px;background:#e8e8e8;border-radius:5px 5px 0 0;"></div>
<div class="a" style="left:517px;top:243px;width:463px;height:1px;background:#d7d7d7;"></div>
<div class="t" id="t47" style="left:702.50px;top:193.41px;font-size:10.5px;line-height:10.5px;color:#808080;font-weight:700;letter-spacing:0.068px;">MMEdit Properties</div>
<svg class="a" style="left:959px;top:190px;" width="15" height="15" viewBox="0 0 15 15"><circle cx="7.5" cy="7.5" r="7.1" fill="#9b9b9b"/><path d="M4.8 4.8 L10.2 10.2 M10.2 4.8 L4.8 10.2" stroke="#fff" stroke-width="1.8"/></svg>
<div class="a" style="left:610px;top:213px;width:277px;height:27px;background:#f3f3f3;box-sizing:border-box;border:1px solid #d6d6d6;border-radius:4px;"></div>
<div class="a" style="left:661px;top:214px;width:81px;height:25px;background:#d0d0d0;"></div>
<div class="a" style="left:661px;top:214px;width:1px;height:25px;background:#d6d6d6;"></div>
<div class="a" style="left:742px;top:214px;width:1px;height:25px;background:#d6d6d6;"></div>
<div class="a" style="left:817px;top:214px;width:1px;height:25px;background:#d6d6d6;"></div>
<div class="t" id="t48" style="left:623.70px;top:222.33px;font-size:10px;line-height:10px;color:#616161;font-weight:400;letter-spacing:0.000px;">Basic</div>
<div class="t" id="t49" style="left:673.30px;top:222.33px;font-size:10px;line-height:10px;color:#5a5a5a;font-weight:400;letter-spacing:0.140px;">Permissions</div>
<div class="t" id="t50" style="left:754.80px;top:222.33px;font-size:10px;line-height:10px;color:#616161;font-weight:400;letter-spacing:0.289px;">Open With</div>
<div class="t" id="t51" style="left:830.60px;top:222.33px;font-size:10px;line-height:10px;color:#616161;font-weight:400;letter-spacing:0.300px;">Emblems</div>
<div class="a" style="left:522px;top:250px;width:454px;height:374px;background:#ffffff;box-sizing:border-box;border:1px solid #d8d8d8;border-radius:2px;"></div>
<div class="t" id="t52" style="left:536.70px;top:267.94px;font-size:10px;line-height:10px;color:#3a3a3a;font-weight:400;letter-spacing:0.420px;">Owner:</div>
<div class="t" id="t53" style="left:611.00px;top:267.94px;font-size:10px;line-height:10px;color:#3a3a3a;font-weight:400;letter-spacing:-0.071px;">graeme - GRAEME</div>
<div class="a" style="left:611px;top:282px;width:168px;height:24px;background:#f8f8f8;box-sizing:border-box;border:1px solid #d3d3d3;border-radius:3px;"></div>
<svg class="a" style="left:761px;top:290px;" width="10" height="6" viewBox="0 0 10 6"><path d="M0.5 0.5 L9 0.5 L4.75 4.6 Z" fill="#1e1e1e"/></svg>
<div class="t" id="t54" style="left:536.70px;top:290.24px;font-size:10px;line-height:10px;color:#3a3a3a;font-weight:400;letter-spacing:0.017px;">Access:</div>
<div class="t" id="t55" style="left:619.70px;top:290.24px;font-size:10px;line-height:10px;color:#3a3a3a;font-weight:400;letter-spacing:0.223px;">Read and write</div>
<div class="a" style="left:611px;top:319px;width:77px;height:24px;background:#f8f8f8;box-sizing:border-box;border:1px solid #d3d3d3;border-radius:3px;"></div>
<svg class="a" style="left:670px;top:327px;" width="10" height="6" viewBox="0 0 10 6"><path d="M0.5 0.5 L9 0.5 L4.75 4.6 Z" fill="#1e1e1e"/></svg>
<div class="t" id="t56" style="left:536.90px;top:327.34px;font-size:10px;line-height:10px;color:#3a3a3a;font-weight:400;letter-spacing:0.400px;">Group:</div>
<div class="t" id="t57" style="left:619.70px;top:327.34px;font-size:10px;line-height:10px;color:#3a3a3a;font-weight:400;letter-spacing:0.280px;">graeme</div>
<div class="a" style="left:611px;top:347px;width:168px;height:24px;background:#f8f8f8;box-sizing:border-box;border:1px solid #d3d3d3;border-radius:3px;"></div>
<svg class="a" style="left:761px;top:355px;" width="10" height="6" viewBox="0 0 10 6"><path d="M0.5 0.5 L9 0.5 L4.75 4.6 Z" fill="#1e1e1e"/></svg>
<div class="t" id="t58" style="left:536.90px;top:354.94px;font-size:10px;line-height:10px;color:#3a3a3a;font-weight:400;letter-spacing:-0.034px;">Access:</div>
<div class="t" id="t59" style="left:619.70px;top:354.94px;font-size:10px;line-height:10px;color:#3a3a3a;font-weight:400;letter-spacing:0.223px;">Read and write</div>
<div class="a" style="left:611px;top:384px;width:168px;height:24px;background:#f8f8f8;box-sizing:border-box;border:1px solid #d3d3d3;border-radius:3px;"></div>
<svg class="a" style="left:761px;top:392px;" width="10" height="6" viewBox="0 0 10 6"><path d="M0.5 0.5 L9 0.5 L4.75 4.6 Z" fill="#1e1e1e"/></svg>
<div class="t" id="t60" style="left:536.90px;top:391.84px;font-size:10px;line-height:10px;color:#3a3a3a;font-weight:400;letter-spacing:-0.034px;">Access:</div>
<div class="t" id="t61" style="left:619.70px;top:391.84px;font-size:10px;line-height:10px;color:#3a3a3a;font-weight:400;letter-spacing:0.250px;">Read-only</div>
<div class="t" id="t62" style="left:536.90px;top:425.14px;font-size:10px;line-height:10px;color:#3a3a3a;font-weight:400;letter-spacing:0.372px;">Execute:</div>
<svg class="a" style="left:613px;top:424px;" width="12" height="12" viewBox="0 0 12 12"><rect x="0.2" y="0.2" width="10.9" height="10.7" rx="1.8" fill="#1f9ede"/><path d="M2.6 5.6 L4.7 7.8 L8.8 3.4" fill="none" stroke="#fff" stroke-width="1.4"/></svg>
<div class="t" id="t63" style="left:626.60px;top:425.14px;font-size:10px;line-height:10px;color:#3a3a3a;font-weight:400;letter-spacing:0.367px;">Allow executing file as program</div>
<div class="t" id="t64" style="left:536.90px;top:453.94px;font-size:10px;line-height:10px;color:#3a3a3a;font-weight:400;letter-spacing:0.301px;">Last changed:</div>
<div class="t" id="t65" style="left:610.70px;top:453.94px;font-size:10px;line-height:10px;color:#3a3a3a;font-weight:400;letter-spacing:0.244px;">Fri 17 Oct 2025 14:10:17</div>
<div class="a" style="left:521.5px;top:627.8px;width:65.5px;height:25.8px;background:#f8f8f8;box-sizing:border-box;border:1px solid #d3d3d3;border-radius:3px;"></div>
<div class="a" style="left:910.5px;top:627.8px;width:65.5px;height:25.8px;background:#f8f8f8;box-sizing:border-box;border:1px solid #d3d3d3;border-radius:3px;"></div>
<div class="t" id="t66" style="left:543.00px;top:636.84px;font-size:10px;line-height:10px;color:#3a3a3a;font-weight:400;letter-spacing:0.533px;">Help</div>
<div class="t" id="t67" style="left:930.00px;top:636.84px;font-size:10px;line-height:10px;color:#3a3a3a;font-weight:400;letter-spacing:0.300px;">Close</div>
</body></html>
